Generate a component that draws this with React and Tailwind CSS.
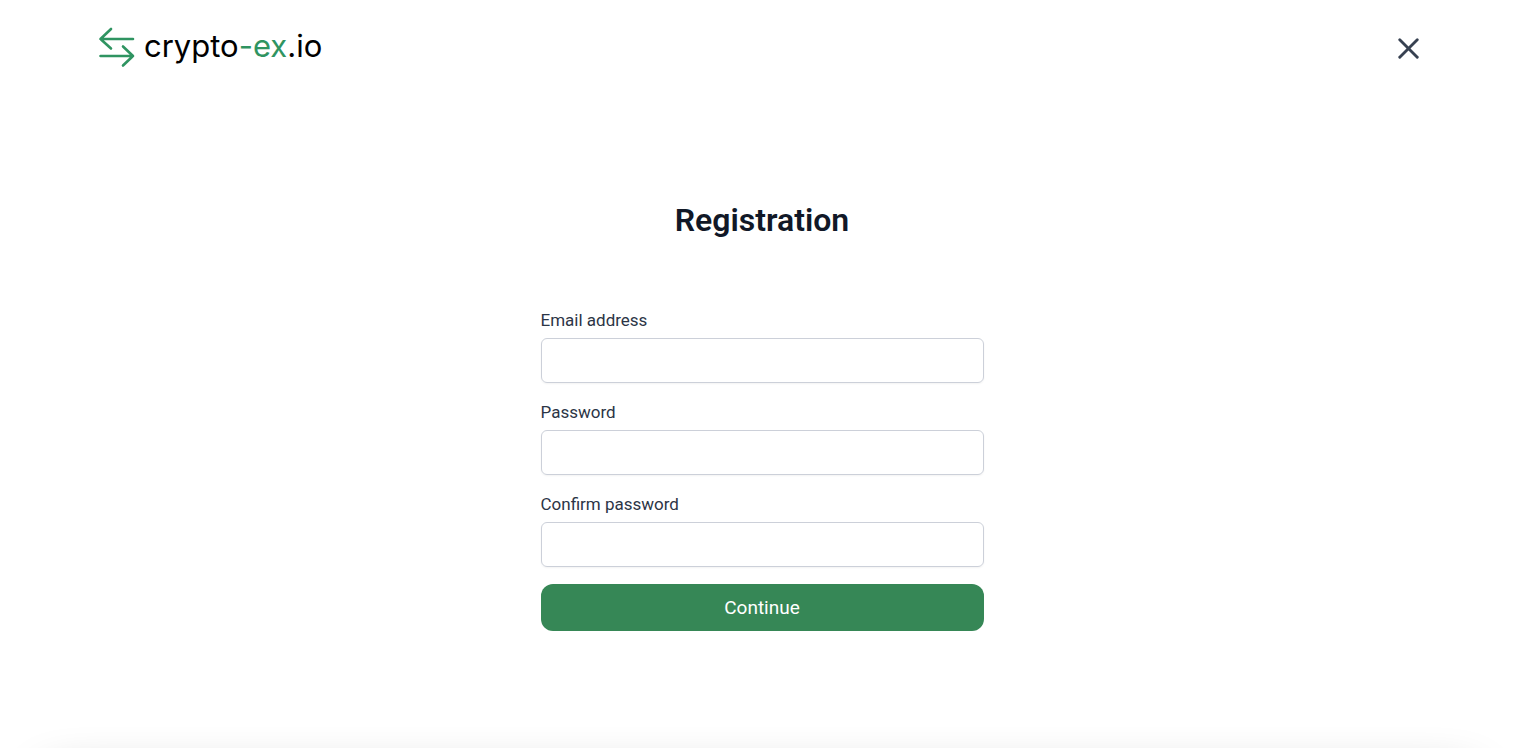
import { useState } from 'react';
import { X } from 'lucide-react';

const fields = [
  { id: 'email', label: 'Email address', type: 'email' },
  { id: 'password', label: 'Password', type: 'password' },
  { id: 'confirmPassword', label: 'Confirm password', type: 'password' },
];

const Logo = () => (
  <a href="#" className="flex items-center gap-2">
    <svg width="38" height="42" viewBox="0 0 38 42" fill="none" stroke="#2f9461" strokeWidth="2.6" strokeLinecap="round" strokeLinejoin="round" aria-hidden="true">
      <path d="M35 13H2.5M13 3L2.5 13L13 22.5" />
      <path d="M2.5 30H35M25 20.5L35 30L25 39.5" />
    </svg>
    <span className="pb-[2px] font-['Inter','Liberation_Sans',sans-serif] text-[31px] leading-8 text-black">
      crypto<span className="text-[#2f9461]">-ex</span>.io
    </span>
  </a>
);

const App = () => {
  const [values, setValues] = useState({ email: '', password: '', confirmPassword: '' });

  const handleChange = (e) => {
    setValues({ ...values, [e.target.name]: e.target.value });
  };

  return (
    <div className="flex min-h-screen flex-col overflow-hidden bg-white pl-1 font-['Roboto','Liberation_Sans',sans-serif]">
      <header className="flex items-center justify-between px-[94px] pt-[26px]">
        <Logo />
        <button type="button" aria-label="Close" className="pt-[2px] text-[#374151]">
          <X size={35} strokeWidth={2} />
        </button>
      </header>

      <main className="mx-auto w-full max-w-[443px] flex-1 pt-[132px]">
        <h1 className="text-center text-[32px] leading-10 font-semibold text-[#111827]">Registration</h1>
        <form className="mt-[68px]" onSubmit={(e) => e.preventDefault()}>
          {fields.map((field) => (
            <div key={field.id} className="mb-[17px]">
              <label htmlFor={field.id} className="block text-[17px] leading-6 text-[#2c3546]">
                {field.label}
              </label>
              <input
                id={field.id}
                name={field.id}
                type={field.type}
                value={values[field.id]}
                onChange={handleChange}
                className="mt-[6px] block h-[45px] w-full rounded-md border border-[#ccd0d9] px-3 shadow-xs outline-none focus:border-[#368756]"
              />
            </div>
          ))}
          <button type="submit" className="h-[47px] w-full rounded-xl bg-[#368756] text-[19px] leading-6 text-white">
            Continue
          </button>
        </form>
      </main>

      {/* only its soft shadow shows above the bottom edge */}
      <div className="mr-10 -mb-24 ml-9 h-24 rounded-2xl bg-white shadow-[0_25px_50px_-6px_rgba(0,0,0,0.32)]" />
    </div>
  );
};

export default App;
